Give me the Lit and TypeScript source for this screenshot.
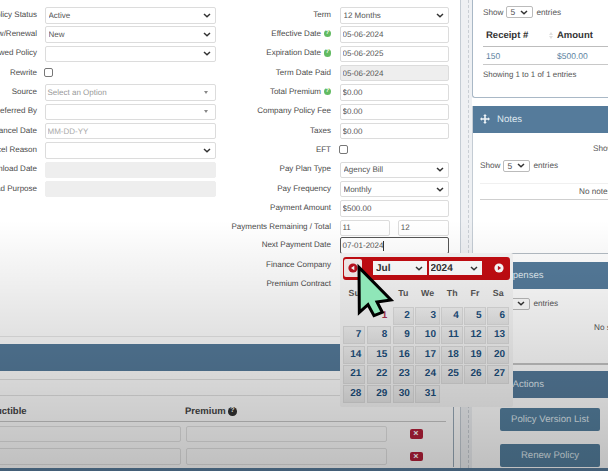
import { LitElement, html, css } from "lit";
import { customElement } from "lit/decorators.js";

type Row = { label: string; kind: string; value?: string; help?: boolean };

const leftRows: Row[] = [
  { label: "Policy Status", kind: "select", value: "Active" },
  { label: "New/Renewal", kind: "select", value: "New" },
  { label: "Renewed Policy", kind: "select", value: "" },
  { label: "Rewrite", kind: "check" },
  { label: "Source", kind: "combo", value: "Select an Option" },
  { label: "Referred By", kind: "combo", value: "" },
  { label: "Cancel Date", kind: "placeholder", value: "MM-DD-YY" },
  { label: "Cancel Reason", kind: "select", value: "" },
  { label: "Download Date", kind: "blank" },
  { label: "Download Purpose", kind: "blank" },
];

const midRows: Row[] = [
  { label: "Term", kind: "select", value: "12 Months" },
  { label: "Effective Date", kind: "input", value: "05-06-2024", help: true },
  { label: "Expiration Date", kind: "input", value: "05-06-2025", help: true },
  { label: "Term Date Paid", kind: "disabled", value: "05-06-2024" },
  { label: "Total Premium", kind: "input", value: "$0.00", help: true },
  { label: "Company Policy Fee", kind: "input", value: "$0.00" },
  { label: "Taxes", kind: "input", value: "$0.00" },
  { label: "EFT", kind: "check" },
  { label: "Pay Plan Type", kind: "select", value: "Agency Bill" },
  { label: "Pay Frequency", kind: "select", value: "Monthly" },
  { label: "Payment Amount", kind: "input", value: "$500.00" },
];

const dayNames = ["Su", "Mo", "Tu", "We", "Th", "Fr", "Sa"];
const leadingBlanks = 1;

const moveIcon = html`<svg width="10" height="10" viewBox="0 0 20 20"><path d="M10 0l3.600 3.800H11.600v4.600H16.200V6.400L20 10l-3.800 3.600v-2H11.600v4.600h2L10 20l-3.600-3.800h2v-4.600H3.800v2L0 10l3.800-3.600v2h4.600V3.800H6.400z" fill="#eef3f7"/></svg>`;

@customElement("app-root")
export class AppRoot extends LitElement {
  static styles = css`
    :host {
      display: block;
      position: relative;
      width: 608px;
      height: 471px;
      overflow: hidden;
      background: #fff;
      font-family: "Liberation Sans", Arial, sans-serif;
      color: #4a4a4a;
      text-rendering: geometricPrecision;
    }
    * { box-sizing: border-box; }
    input, select { text-rendering: geometricPrecision; }
    .page { display: flex; height: 468px; }
    .main { width: 461px; flex: none; border-right: 1px solid #c4ccd4; }
    .gutter {
      width: 11px;
      flex: none;
      background: #eef0f3;
      padding-left: 6.5px;
    }
    .dash { height: 100%; border-left: 1px dashed #c9ced4; }
    .side { flex: 1; min-width: 0; display: flex; flex-direction: column; overflow: hidden; }
    .foot { height: 3px; background: #5a7f9f; }

    .form { height: 338px; display: flex; padding-top: 7px; border-top: 1px solid #eef3f8; margin-top: -1px; border-bottom: 1px solid #e8e8e8; }
    .col { display: flex; flex-direction: column; gap: 2.83px; }
    .row { display: grid; height: 16.5px; align-items: center; }
    .col.l .row { grid-template-columns: 37px 171px; column-gap: 8px; }
    .col.m .row { grid-template-columns: 115px 109px; column-gap: 9px; }
    .label {
      display: flex;
      justify-content: flex-end;
      align-items: center;
      gap: 2.5px;
      white-space: nowrap;
      font-size: 8px;
      padding-bottom: 2px;
      min-width: 0;
    }
    .tip {
      width: 7.5px;
      height: 7.5px;
      border-radius: 50%;
      background: #62bb62;
      color: #fff;
      font-size: 6px;
      font-weight: bold;
      line-height: 7.5px;
      text-align: center;
      flex: none;
    }
    .field, select.field {
      height: 16.5px;
      width: 100%;
      border: 1px solid #dcdcdc;
      border-radius: 2px;
      background: #fff;
      font: 8px "Liberation Sans", Arial, sans-serif;
      color: #555;
      padding: 0 1.5px;
      display: flex;
      align-items: center;
      min-width: 0;
    }
    select.field, .show select, .calhead select {
      display: block;
      appearance: none;
      background-image: url("data:image/svg+xml,%3Csvg xmlns='http://www.w3.org/2000/svg' width='8' height='5'%3E%3Cpath d='M1 1l3 2.700L7 1' fill='none' stroke='%23333' stroke-width='1.500'/%3E%3C/svg%3E");
      background-repeat: no-repeat;
      background-position: right 4px center;
    }
    select.field { padding: 0 0 0 2.5px; }
    .field.ph { color: #aaa; }
    .field.ph::placeholder { color: #aaa; }
    .field.off { background: #eee; }
    .field.blank { background: #eee; border-color: #eee; }
    .combo { justify-content: space-between; padding-right: 7px; }
    .combo .val { color: #999; }
    .caretdown { width: 0; height: 0; border: 2.2px solid transparent; border-top: 3px solid #888; border-bottom: 0; }
    .checkwrap { display: flex; padding-bottom: 2px; }
    .check {
      appearance: none;
      width: 9px;
      height: 9px;
      margin: 0 0 0 -1px;
      border: 1px solid #777;
      border-radius: 2px;
      background: #fff;
    }
    .pair { display: flex; gap: 8px; }
    .pair .field { width: 50.5px; }
    .pair .field:last-child { width: 51px; }
    .tight { margin-top: -1.5px; }
    .focus { border-color: #555; }
    .cursorbar { display: inline-block; width: 1px; height: 10px; background: #333; }
    .plain { height: 16.5px; }

    .lower { width: 454px; height: 130px; border-right: 1px solid #98a9b8; overflow: hidden; }
    .band { height: 27px; background: #557b9b; margin-top: 7px; }
    .line1 { height: 9px; border-bottom: 1px solid #e2e2e2; }
    .line2 { height: 16px; border-bottom: 1px solid #e2e2e2; }
    .tbl { margin-left: -22px; margin-right: 7px; }
    .thead {
      display: grid;
      grid-template-columns: 207px 206px 1fr;
      height: 26px;
      align-items: end;
      padding-bottom: 4px;
      border-bottom: 1px solid #c8c8c8;
      font-size: 9.5px;
      font-weight: bold;
      color: #444;
    }
    .prem { display: flex; align-items: center; gap: 2.5px; }
    .qm {
      width: 8.5px;
      height: 8.5px;
      border-radius: 50%;
      background: #333;
      color: #fff;
      font-size: 7px;
      line-height: 8.5px;
      text-align: center;
    }
    .tr { display: grid; grid-template-columns: 208px 206px 1fr; height: 16.5px; margin-top: 6.3px; align-items: center; }
    .thead + .tr { margin-top: 3.7px; }
    .tr .field { width: auto; margin-right: 5px; border-color: #e4e4e4; }
    .del {
      justify-self: center;
      margin-left: -6px;
      width: 13px;
      height: 9.5px;
      border-radius: 2px;
      background: #b5203a;
      color: #fff;
      font-size: 9px;
      font-weight: bold;
      line-height: 9.5px;
      text-align: center;
    }

    .card1 { height: 98px; flex: none; border-left: 1px solid #a9b8c6; border-bottom: 1px solid #a9b8c6; border-bottom-left-radius: 3px; padding: 6px 0 0 10px; }
    .show { display: flex; align-items: center; gap: 3px; font-size: 8.2px; color: #555; height: 12px; }
    .show select {
      width: 27px;
      height: 12px;
      padding: 0 0 0 3px;
      font: 8.5px "Liberation Sans", Arial, sans-serif;
      color: #555;
      background-color: #fff;
      border: 1px solid #bbb;
      border-radius: 2px;
    }
    .dt { margin-top: 12px; width: 140px; }
    .dthead { display: grid; grid-template-columns: 71px 1fr; height: 17px; padding-left: 3px; font-size: 9.5px; font-weight: bold; color: #333; border-bottom: 1px solid #bdbdbd; align-items: start; }
    .sorted { display: flex; justify-content: space-between; padding-right: 4px; }
    .sort { width: 4px; display: flex; flex-direction: column; gap: 1px; margin-top: 2px; }
    .sort i { display: block; border: 2px solid transparent; }
    .sort i:first-child { border-top: 0; border-bottom: 3px solid #e0e0e0; }
    .sort i:last-child { border-bottom: 0; border-top: 3px solid #e0e0e0; }
    .dtrow { display: grid; grid-template-columns: 71px 1fr; height: 18px; padding-left: 3px; align-items: center; font-size: 8.5px; color: #5b7fa0; border-bottom: 1px solid #c8c8c8; }
    .info { font-size: 7.9px; margin-top: 5px; color: #555; white-space: nowrap; }

    .card { flex: none; margin-top: 8px; border-left: 1px solid #c4ccd4; }
    .head { height: 26.5px; background: #557b9b; color: #dfe8ef; font-size: 9.6px; display: flex; align-items: center; gap: 7px; padding-left: 7px; }
    .notes { height: 148px; border-bottom: 1px solid #b4bcc4; }
    .rtext { display: block; text-align: left; padding-left: 120px; font-size: 8.2px; color: #555; margin-top: 11px; height: 10px; white-space: nowrap; }
    .inner { padding-left: 7px; margin-top: 6px; }
    .empty { margin-top: 11px; height: 17px; border-top: 1px solid #f0f0f0; border-bottom: 1px solid #cfcfcf; font-size: 8.2px; color: #555; padding: 3px 0 0 99px; white-space: nowrap; }
    .exp { height: 103px; border-bottom: 2px solid #c4c4c4; }
    .exp .show { margin-top: 9px; margin-left: 7px; }
    .exp .none { margin-top: 13px; padding-left: 121px; font-size: 8.2px; color: #555; white-space: nowrap; }
    .expname { margin-left: 4.5px; }
    .actions { margin-top: 6px; border-left: 0; flex: 1; }
    .actions .head { padding-left: 40.5px; }
    .btn {
      display: block;
      width: 100px;
      height: 23px;
      margin: 10px 0 0 28px;
      background: #55809f;
      border-radius: 2px;
      color: #dfe8ef;
      font-size: 9.6px;
      line-height: 23px;
      text-align: center;
    }
    .btn + .btn { margin-top: 13px; }

    .cal {
      position: absolute;
      left: 340px;
      top: 253px;
      width: 173px;
      height: 154px;
      padding: 3.5px 3px 0;
      background: #f6f6f6;
      border-radius: 2px;
    }
    .calhead {
      height: 23px;
      background: #c40c12;
      border-radius: 3px;
      display: flex;
      align-items: center;
      padding: 0 5px 0 1px;
    }
    .prev {
      width: 18px;
      height: 18px;
      background: #f8eeee;
      border-radius: 2px;
      display: flex;
      align-items: center;
      justify-content: center;
      flex: none;
    }
    .calhead select {
      height: 13.5px;
      font: bold 10px "Liberation Sans", Arial, sans-serif;
      color: #333;
      background-color: #fff;
      border: 0;
    }
    .mon { width: 54px; margin-left: 11px; padding: 0 0 0 3px; }
    .yr { width: 53px; margin-left: 1.5px; padding: 0 0 0 2px; }
    .next { margin-left: auto; display: flex; margin-right: 1px; }
    .grid {
      display: grid;
      grid-template-columns: 22.4px 24.4px 21px 24.7px 21.4px 21.3px 22px;
      grid-auto-rows: 18.3px;
      gap: 1.3px 1.5px;
    }
    .dow {
      display: grid;
      grid-template-columns: 22.4px 24.4px 21px 24.7px 21.4px 21.3px 22px;
      column-gap: 1.5px;
      height: 27px;
      align-items: center;
      font-size: 8.8px;
      font-weight: bold;
      color: #555;
      text-align: center;
    }
    .day {
      background: linear-gradient(#f0f0f0, #e6e6e6);
      border: 1px solid #dcdcdc;
      color: #1c4f7c;
      font-size: 10px;
      font-weight: bold;
      text-align: right;
      padding-right: 3px;
      line-height: 16.3px;
    }
    .day.today { background: transparent; border-color: transparent; color: #a8324f; }
    .day.none { visibility: hidden; }

    .shade {
      position: absolute;
      inset: 0;
      pointer-events: none;
      background: linear-gradient(to bottom, rgba(0,0,0,0) 220px, rgba(0,0,0,0.25) 471px);
    }
    .arrow { position: absolute; left: 335px; top: 250px; width: 61px; height: 70px; }
  `;

  private renderControl(r: Row) {
    switch (r.kind) {
      case "select":
        return html`<select class="field"><option>${r.value}</option></select>`;
      case "check":
        return html`<div class="checkwrap"><input class="check" type="checkbox" /></div>`;
      case "combo":
        return html`<div class="field combo"><span class="val">${r.value}</span><span class="caretdown"></span></div>`;
      case "placeholder":
        return html`<input class="field ph" placeholder=${r.value ?? ""} />`;
      case "blank":
        return html`<div class="field blank"></div>`;
      case "disabled":
        return html`<input class="field off" disabled .value=${r.value ?? ""} />`;
      default:
        return html`<input class="field" .value=${r.value ?? ""} />`;
    }
  }

  private renderRow(r: Row) {
    return html`<div class="row">
      <div class="label"><span>${r.label}</span>${r.help ? html`<span class="tip">?</span>` : ""}</div>
      ${this.renderControl(r)}
    </div>`;
  }

  private renderShow() {
    return html`<div class="show">Show <select><option>5</option></select> entries</div>`;
  }

  private renderCalendar() {
    const cells = [
      ...Array(leadingBlanks).fill(0),
      ...Array.from({ length: 31 }, (_, i) => i + 1),
    ];
    return html`<div class="cal">
      <div class="calhead">
        <span class="prev">
          <svg width="10" height="10" viewBox="0 0 10 10"><circle cx="5" cy="5" r="4.6" fill="#bd1220"/><path d="M6.300 2.700v4.600L3 5z" fill="#fff"/></svg>
        </span>
        <select class="mon"><option>Jul</option></select>
        <select class="yr"><option>2024</option></select>
        <span class="next">
          <svg width="10" height="10" viewBox="0 0 10 10"><circle cx="5" cy="5" r="4.6" fill="#fff"/><path d="M3.900 2.700v4.600L7.100 5z" fill="#bd1220"/></svg>
        </span>
      </div>
      <div class="dow">${dayNames.map((d) => html`<span>${d}</span>`)}</div>
      <div class="grid">
        ${cells.map((n) =>
          n === 0
            ? html`<span class="day none"></span>`
            : html`<span class="day ${n === 1 ? "today" : ""}">${n}</span>`
        )}
      </div>
    </div>`;
  }

  render() {
    return html`
      <div class="page">
        <div class="main">
          <div class="form">
            <div class="col l">${leftRows.map((r) => this.renderRow(r))}</div>
            <div class="col m">
              ${midRows.map((r) => this.renderRow(r))}
              <div class="row">
                <div class="label">Payments Remaining / Total</div>
                <div class="pair"><input class="field" .value=${"11"} /><input class="field" .value=${"12"} /></div>
              </div>
              <div class="row tight">
                <div class="label">Next Payment Date</div>
                <div class="field focus">07-01-2024<span class="cursorbar"></span></div>
              </div>
              <div class="row">
                <div class="label">Finance Company</div>
                <div class="plain"></div>
              </div>
              <div class="row">
                <div class="label">Premium Contract</div>
                <div class="plain"></div>
              </div>
            </div>
          </div>
          <div class="lower">
            <div class="band"></div>
            <div class="line1"></div>
            <div class="line2"></div>
            <div class="tbl">
              <div class="thead">
                <span>Deductible</span>
                <span class="prem">Premium <span class="qm">?</span></span>
                <span></span>
              </div>
              <div class="tr"><div class="field"></div><div class="field"></div><span class="del">×</span></div>
              <div class="tr"><div class="field"></div><div class="field"></div><span class="del">×</span></div>
            </div>
          </div>
        </div>
        <div class="gutter"><div class="dash"></div></div>
        <div class="side">
          <section class="card1">
            ${this.renderShow()}
            <div class="dt">
              <div class="dthead">
                <span class="sorted">Receipt # <span class="sort"><i></i><i></i></span></span>
                <span>Amount</span>
              </div>
              <div class="dtrow"><span>150</span><span>$500.00</span></div>
            </div>
            <div class="info">Showing 1 to 1 of 1 entries</div>
          </section>
          <section class="card notes">
            <div class="head">${moveIcon}<span>Notes</span></div>
            <span class="rtext">Show</span>
            <div class="inner">
              ${this.renderShow()}
              <div class="empty">No notes</div>
            </div>
          </section>
          <section class="card exp">
            <div class="head">${moveIcon}<span class="expname">Expenses</span></div>
            ${this.renderShow()}
            <div class="none">No sub</div>
          </section>
          <section class="card actions">
            <div class="head">Actions</div>
            <a class="btn">Policy Version List</a>
            <a class="btn">Renew Policy</a>
          </section>
        </div>
      </div>
      <div class="foot"></div>
      ${this.renderCalendar()}
      <div class="shade"></div>
      <svg class="arrow" viewBox="0 0 183 210">
        <path d="M72 52L168 150L126 156L142 187L117 197L99 164L73 187Z" fill="#8fe6b8" stroke="#000" stroke-width="9" stroke-linejoin="miter"/>
      </svg>
    `;
  }
}
